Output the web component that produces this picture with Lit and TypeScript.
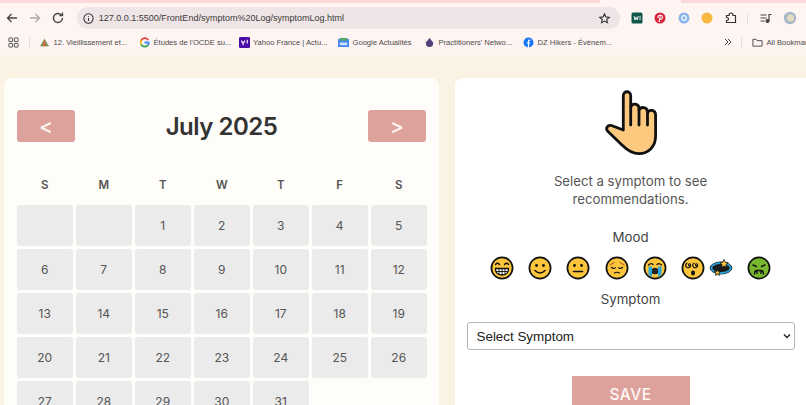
import { LitElement, html, css, svg } from "lit";
import { customElement } from "lit/decorators.js";

const days: (number | null)[] = [null, null, ...Array.from({ length: 31 }, (_, i) => i + 1)];
const labels = ["S", "M", "T", "W", "T", "F", "S"];
const stroke = "#111";

const face = (fill: string, inner: unknown) => svg`
  <circle cx="12" cy="12" r="10.6" fill=${fill} stroke=${stroke} stroke-width="1.7"></circle>${inner}`;
const eyes = svg`<circle cx="8.5" cy="9.5" r="1.4" fill=${stroke}></circle><circle cx="15.5" cy="9.5" r="1.4" fill=${stroke}></circle>`;

const moods = [
  face("#fcc53c", svg`
    <path d="M5.5 8.5q2-2.4 4 0M14.5 8.5q2-2.4 4 0" fill="none" stroke=${stroke} stroke-width="1.4" stroke-linecap="round"></path>
    <path d="M5.5 12.5h13q.5 6-6.5 6.5q-7-.5-6.5-6.5z" fill="#fff" stroke=${stroke} stroke-width="1.3"></path>
    <path d="M5.8 15.5h12.4M9 12.5v6M12 12.5v6.5M15 12.5v6" stroke=${stroke} stroke-width=".9"></path>`),
  face("#fcc53c", svg`${eyes}<path d="M7 14.5q5 5 10 0" fill="none" stroke=${stroke} stroke-width="1.5" stroke-linecap="round"></path>`),
  face("#fcc53c", svg`${eyes}<path d="M7.5 15.5h9" fill="none" stroke=${stroke} stroke-width="1.6" stroke-linecap="round"></path>`),
  face("#fcc53c", svg`
    <path d="M5 9l4-2.5M19 9l-4-2.5" stroke="#b9762a" stroke-width="1.4" stroke-linecap="round"></path>
    <path d="M6.5 11.5q2 1.8 4 .3M13.5 11.8q2 1.5 4-.3M9.5 17q2.5-1.5 5 0" fill="none" stroke=${stroke} stroke-width="1.2" stroke-linecap="round"></path>`),
  face("#fcc53c", svg`
    <path d="M5.5 9q2.5-2.5 4.5-.5M18.5 9q-2.5-2.5-4.5-.5" fill="none" stroke=${stroke} stroke-width="1.3" stroke-linecap="round"></path>
    <path d="M9 13q3-2.5 6 0l1 4q-4 2.5-8 0z" fill="#222"></path>
    <path d="M5.5 10.5h3.5v10.5q-2.5-1-3.5-3zM15 10.5h3.5v7.5q-1 2-3.5 3z" fill="#29a7e1"></path>`),
  face("#fcc53c", svg`
    <path d="M8.5 9.8a1 1 0 1 1 1-.8a2.4 2.4 0 1 1-3.5-1.8M15.5 9.8a1 1 0 1 1 1-.8a2.4 2.4 0 1 1-3.5-1.8" fill="none" stroke=${stroke} stroke-width="1.1" stroke-linecap="round"></path>
    <ellipse cx="12" cy="17" rx="2" ry="2.4" fill=${stroke}></ellipse>`),
  svg`
    <ellipse cx="12" cy="12" rx="11.3" ry="6.5" fill="#1c1c1c"></ellipse>
    <ellipse cx="12" cy="12" rx="9.6" ry="5" fill="none" stroke="#2aa3dd" stroke-width="1.8"></ellipse>
    <path d="M15 3.5l1.2 2.8 3 .3-2.3 2 .7 3-2.6-1.6-2.6 1.6.7-3-2.3-2 3-.3z" fill="#fcc53c" stroke=${stroke} stroke-width=".8"></path>
    <path d="M8.5 13.5l.9 2 2.2.2-1.7 1.5.5 2.2-1.9-1.2-1.9 1.2.5-2.2-1.7-1.5 2.2-.2z" fill="#fcc53c" stroke=${stroke} stroke-width=".8"></path>`,
  face("#79b82e", svg`
    <path d="M6 9l3.5 1.5M18 9l-3.5 1.5" stroke=${stroke} stroke-width="1.4" stroke-linecap="round"></path>
    <path d="M7.5 18q0-3.5 2.5-3.5h4q2.5 0 2.5 3.5M10 14.5v3M14 14.5v3" fill="none" stroke=${stroke} stroke-width="1.4" stroke-linecap="round"></path>`),
];

@customElement("app-root")
export class AppRoot extends LitElement {
  static styles = css`
    :host {
      display: block;
      width: 806px;
      height: 405px;
      overflow: hidden;
      background: #faf3e3;
      font-family: "Inter", "Liberation Sans", sans-serif;
      color: #333;
    }
    .tabs {
      display: flex;
      justify-content: space-between;
      height: 3px;
      background: #fff4f2;
    }
    .tabs i { display: block; height: 3px; background: #fdd9dc; }
    .tabs i:first-child { width: 600px; }
    .tabs i:last-child { width: 125px; }
    .toolbar {
      display: flex;
      align-items: center;
      height: 30px;
      background: #fef5f3;
      padding-left: 3px;
    }
    .nav { display: flex; width: 73px; padding-left: 1px; }
    .nav svg { width: 16px; height: 16px; margin-right: 7px; }
    .address {
      display: flex;
      align-items: center;
      box-sizing: border-box;
      width: 544px;
      height: 22px;
      border-radius: 11px;
      background: #efe4e6;
      padding: 0 9px 0 5px;
      font: 9px "Liberation Sans", sans-serif;
      color: #3c3c3c;
    }
    .address span { margin-left: 4px; flex: 1; }
    .exts { display: flex; align-items: center; margin-left: 10px; }
    .exts svg { width: 14px; height: 14px; margin-right: 9.5px; }
    .bookmarks {
      box-sizing: border-box;
      display: flex;
      align-items: center;
      height: 22px;
      background: #fef5f3;
      padding: 0 0 4px 8px;
      font: 7.6px "Liberation Sans", sans-serif;
      color: #4a4a4a;
      white-space: nowrap;
      overflow: hidden;
    }
    .bm { display: flex; align-items: center; gap: 3.5px; flex: none; }
    .bm svg { width: 11px; height: 11px; flex: none; }
    .sep { width: 1px; height: 11px; background: #eadcda; flex: none; }
    .page {
      display: flex;
      gap: 16px;
      padding: 23px 0 0 4px;
    }
    .calendar {
      box-sizing: border-box;
      width: 435px;
      height: 400px;
      flex: none;
      background: #fffdf9;
      border-radius: 8px 8px 0 0;
      padding: 32px 13px 0;
    }
    .head {
      display: flex;
      align-items: center;
      justify-content: space-between;
      height: 32px;
    }
    .arrow {
      width: 58px;
      height: 32px;
      border-radius: 3px;
      background: #dea29d;
      color: #fff8f5;
      font-size: 21px;
      font-weight: 500;
      display: flex;
      align-items: center;
      justify-content: center;
    }
    h2 {
      margin: 0;
      font-size: 24px;
      font-weight: 600;
      letter-spacing: -0.5px;
      color: #333;
    }
    .labels, .grid {
      display: grid;
      grid-template-columns: repeat(7, 55.5px);
      column-gap: 3.5px;
      row-gap: 3px;
    }
    .labels {
      margin-top: 34px;
      height: 18px;
      line-height: 18px;
      text-align: center;
      font-size: 11.5px;
      font-weight: 600;
      color: #555;
    }
    .grid { margin-top: 11px; grid-auto-rows: 41px; }
    .cell {
      display: flex;
      align-items: center;
      justify-content: center;
      background: #ebebeb;
      border-radius: 3px;
      font-size: 12px;
      color: #555;
    }
    .panel {
      box-sizing: border-box;
      width: 351px;
      height: 400px;
      flex: none;
      background: #fff;
      border-radius: 8px 0 0 0;
      display: flex;
      flex-direction: column;
      align-items: center;
      padding-top: 11px;
    }
    .hand { width: 62px; height: 68px; display: block; }
    .prompt {
      margin: 15px 0 0;
      width: 220px;
      text-align: center;
      font-size: 13.2px;
      line-height: 18px;
      color: #555;
    }
    .title { margin-top: 20px; font-size: 13.3px; line-height: 18px; color: #444; }
    .moods {
      display: flex;
      gap: 14.3px;
      margin-top: 10px;
      align-items: center;
    }
    .moods svg { width: 24px; height: 24px; display: block; }
    .moods svg.tight { margin-left: -10.3px; }
    .symptom { margin-top: 10px; }
    .select {
      box-sizing: border-box;
      display: flex;
      align-items: center;
      justify-content: space-between;
      width: 328px;
      height: 28px;
      margin-top: 14px;
      padding: 0 3px 0 9px;
      border: 1px solid #b5b5b5;
      border-radius: 3px;
      background: #fff;
      font: 13.4px "Liberation Sans", sans-serif;
      color: #222;
    }
    .select svg { width: 8px; height: 8px; }
    .save {
      display: flex;
      align-items: center;
      justify-content: center;
      width: 118px;
      height: 36px;
      margin-top: 26px;
      background: #dea29d;
      color: #fff8f5;
      font-size: 15.5px;
      font-weight: 500;
      letter-spacing: 0.5px;
    }
  `;

  render() {
    return html`
      <div class="tabs"><i></i><i></i></div>
      <div class="toolbar">
        <div class="nav">
          <svg viewBox="0 0 16 16" fill="none" stroke="#444" stroke-width="1.3"><path d="M13 8H3.5M7.5 4L3.5 8l4 4"></path></svg>
          <svg viewBox="0 0 16 16" fill="none" stroke="#aaa" stroke-width="1.3"><path d="M3 8h9.5M8.5 4l4 4-4 4"></path></svg>
          <svg viewBox="0 0 16 16" fill="none" stroke="#444" stroke-width="1.4"><path d="M12.5 8a4.5 4.5 0 1 1-1.3-3.2M12.5 2.5v3h-3"></path></svg>
        </div>
        <div class="address">
          <svg width="13" height="13" viewBox="0 0 14 14" fill="none" stroke="#333" stroke-width="1.1"><circle cx="7" cy="7" r="5"></circle><path d="M7 6.5v3.2M7 4.2v1"></path></svg>
          <span>127.0.0.1:5500/FrontEnd/symptom%20Log/symptomLog.html</span>
          <svg width="13" height="13" viewBox="0 0 14 14" fill="none" stroke="#333" stroke-width="1.2"><path d="M7 2l1.5 3.3 3.6.4-2.7 2.4.8 3.5L7 9.8l-3.2 1.8.8-3.5L1.900 5.700l3.600-.4z"></path></svg>
        </div>
        <div class="exts">
          <svg viewBox="0 0 14 14"><rect x="1.5" y="1.5" width="11" height="11" rx="1.5" fill="#10584a"></rect><path d="M4 5l1 4 1.2-3 1 3 1-4M10 5v4" stroke="#fff" stroke-width=".9" fill="none"></path></svg>
          <svg viewBox="0 0 14 14"><circle cx="7" cy="7" r="5.5" fill="#d6263d"></circle><path d="M6 11l1.3-5.5M5 7q-.5-2.5 2.2-2.8 2.5 0 2.2 2.3-.5 2.3-2.6 1.5" stroke="#fff" stroke-width="1.1" fill="none"></path></svg>
          <svg viewBox="0 0 14 14"><circle cx="7" cy="7" r="5.5" fill="#8ab4ee"></circle><circle cx="7" cy="7" r="2.3" fill="none" stroke="#fff" stroke-width="1.2"></circle></svg>
          <svg viewBox="0 0 14 14"><circle cx="7" cy="7" r="5.5" fill="#f8b73e"></circle></svg>
          <svg viewBox="0 0 14 14" fill="none" stroke="#333" stroke-width="1.2"><path d="M2.5 4.5h2.5q0-2.5 2-2.500t2 2.500h2.500v7h-9v-2q2 0 2-1.500t-2-1.500z"></path></svg>
          <span class="sep"></span>
          <svg style="margin-left:11px" viewBox="0 0 14 14" fill="none" stroke="#444" stroke-width="1.2"><path d="M1.5 4h6M1.5 7h6M1.5 10h4M10 10V3.5h2.5"></path><circle cx="8.5" cy="10" r="1.5" fill="#444"></circle></svg>
          <svg viewBox="0 0 14 14"><circle cx="7" cy="7" r="6.2" fill="#a8b8c8"></circle><circle cx="7.5" cy="7" r="3.5" fill="#e5dcc0"></circle></svg>
        </div>
      </div>
      <div class="bookmarks">
        <svg width="11" height="11" viewBox="0 0 12 12" fill="none" stroke="#444" stroke-width="1" style="flex:none"><rect x="1" y="1" width="4" height="4" rx=".6"></rect><rect x="7" y="1" width="4" height="4" rx=".6"></rect><rect x="1" y="7" width="4" height="4" rx=".6"></rect><rect x="7" y="7" width="4" height="4" rx=".6"></rect></svg>
        <span class="sep" style="margin:0 9px 0 10px"></span>
        <span class="bm" style="width:100px"><svg viewBox="0 0 12 12"><path d="M6 2l5 8H1z" fill="#6f9b63"></path><path d="M6 2l2 8H4z" fill="#d9653c"></path></svg>12. Vieillissement et...</span>
        <span class="bm" style="width:99.5px"><svg viewBox="0 0 12 12" fill="none" stroke-width="2"><path d="M10 3.2A4.5 4.5 0 0 0 2.2 4" stroke="#ea4335"></path><path d="M2.2 4a4.5 4.5 0 0 0 0 4" stroke="#fbbc05"></path><path d="M2.2 8a4.5 4.5 0 0 0 7.8.5" stroke="#34a853"></path><path d="M10 8.5Q11 7 10.5 6H6" stroke="#4285f4"></path></svg>Études de l'OCDE su...</span>
        <span class="bm" style="width:99.5px"><svg viewBox="0 0 12 12"><rect width="12" height="12" rx="1.5" fill="#4b0fa8"></rect><path d="M2.5 4l2 3 2-3M4.5 7v2M9 3v4" stroke="#fff" stroke-width="1.2" fill="none"></path></svg>Yahoo France | Actu...</span>
        <span class="bm" style="width:86px"><svg viewBox="0 0 12 12"><rect y="2" width="12" height="9" rx="1" fill="#4285f4"></rect><rect x="2" y="1" width="8" height="3" fill="#5aa465"></rect><rect x="2" y="6" width="8" height="3" fill="#cfe0fb"></rect></svg>Google Actualités</span>
        <span class="bm" style="width:99px"><svg viewBox="0 0 12 12"><path d="M6 1l4 5q0 5-4 5t-4-5z" fill="#544078"></path></svg>Practitioners' Netwo...</span>
        <span class="bm" style="width:201px"><svg viewBox="0 0 12 12"><circle cx="6" cy="6" r="5.5" fill="#1877f2"></circle><path d="M8 3.5H7q-1 0-1 1V12M4.500 6.500h3" stroke="#fff" stroke-width="1.3" fill="none"></path></svg>DZ Hikers - Évènem...</span>
        <svg width="8" height="8" viewBox="0 0 8 8" fill="none" stroke="#444" style="flex:none"><path d="M1 1l3 3-3 3M4 1l3 3-3 3"></path></svg>
        <span class="sep" style="margin:0 10px 0 9px"></span>
        <span class="bm"><svg viewBox="0 0 12 12" fill="none" stroke="#444"><path d="M1 2.5h3.5l1 1.5H11v6H1z"></path></svg>All Bookmarks</span>
      </div>
      <div class="page">
        <section class="calendar">
          <div class="head">
            <div class="arrow">&lt;</div>
            <h2>July 2025</h2>
            <div class="arrow">&gt;</div>
          </div>
          <div class="labels">${labels.map((l) => html`<div>${l}</div>`)}</div>
          <div class="grid">
            ${days.map((d) => html`<div class="cell">${d ?? ""}</div>`)}
          </div>
        </section>
        <section class="panel">
          <svg class="hand" viewBox="0 0 62 68" stroke="#111" stroke-width="2.8" stroke-linejoin="round" stroke-linecap="round">
            <path d="M23.3 41V6.5C23.3 1.5 30.7 1.5 30.7 6.5V18C32 14 38.5 14 39 19V21C40.5 17.500 47 17.500 47.500 22.500V24C49 20 55.600 20.500 55.600 26V47C55.600 58 48 64.600 39 64.600C31 64.600 26 60 22 56L8 42.500C5 39.500 7.500 35.500 11.500 36.500Z" fill="#fdc97f"></path>
            <path d="M30.7 18V36M39 21V36M47.5 24V36" fill="none"></path>
          </svg>
          <p class="prompt">Select a symptom to see recommendations.</p>
          <div class="title">Mood</div>
          <div class="moods">${moods.map((m, i) => html`<svg class=${i === 6 ? "tight" : ""} viewBox="0 0 24 24">${m}</svg>`)}</div>
          <div class="title symptom">Symptom</div>
          <div class="select">
            <span>Select Symptom</span>
            <svg viewBox="0 0 8 8" fill="none" stroke="#222" stroke-width="1.4"><path d="M1 2.5l3 3 3-3"></path></svg>
          </div>
          <div class="save">SAVE</div>
        </section>
      </div>
    `;
  }
}
